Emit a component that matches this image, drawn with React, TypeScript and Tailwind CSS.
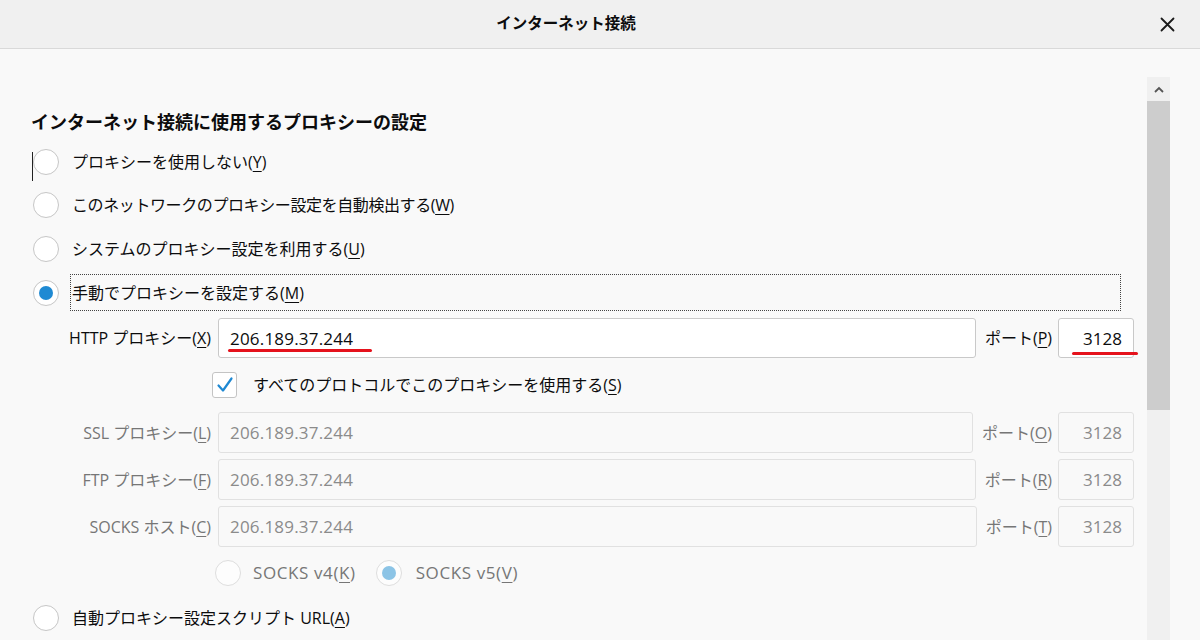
import React from "react";

const FONT = "font-['Open_Sans','Noto_Sans_CJK_JP',sans-serif]";

function Radio({ checked = false, disabled = false }: { checked?: boolean; disabled?: boolean }) {
  return (
    <span
      className={
        "w-[26px] h-[26px] rounded-full border flex items-center justify-center shrink-0 " +
        (disabled ? "border-[#dedede] bg-[#fdfdfd]" : "border-[#c6c6c6] bg-white")
      }
    >
      {checked && (
        <span className={"w-[14px] h-[14px] rounded-full " + (disabled ? "bg-[#8cc4e6]" : "bg-[#1f8ad3]")} />
      )}
    </span>
  );
}

function U({ children }: { children: React.ReactNode }) {
  return <span className="underline underline-offset-[3px] decoration-1">{children}</span>;
}

function ProxyRow({
  label,
  keyChar,
  portKey,
  disabled,
  mark,
}: {
  label: string;
  keyChar: string;
  portKey: string;
  disabled?: boolean;
  mark?: boolean;
}) {
  const txt = disabled ? "text-[#767676]" : "text-[#0c0c0d]";
  const box = disabled
    ? "border-[#e1e1e1] bg-[#f9f9f9] text-[#8b8b8b]"
    : "border-[#c9c9c9] bg-white text-[#0c0c0d]";
  return (
    <div className={"flex items-center " + (disabled ? "h-[41px]" : "h-[40px]")}>
      <div className={"w-[181px] shrink-0 text-right text-[16px] pr-[1px] " + txt}>
        {label}(<U>{keyChar}</U>)
      </div>
      <div className={"relative ml-[6px] flex-1 h-full border rounded-[3px] flex items-center pl-[11px] text-[17px] tracking-[0.2px] " + box}>
        206.189.37.244
        {mark && <span className="absolute left-[9px] top-[30px] w-[144px] h-[3px] rounded-full bg-[#e5121c]" />}
      </div>
      <div className={"ml-[9px] text-[16px] whitespace-nowrap " + txt}>
        ポート(<U>{portKey}</U>)
      </div>
      <div className={"relative ml-[6px] w-[76px] shrink-0 h-full border rounded-[3px] flex items-center justify-end pr-[11px] text-[17px] " + box}>
        3128
        {mark && <span className="absolute left-[13px] top-[33px] w-[66px] h-[3px] rounded-full bg-[#e5121c]" />}
      </div>
    </div>
  );
}

export default function App() {
  return (
    <div className={"w-[1200px] h-[640px] overflow-hidden bg-[#f9f9f9] text-[#0c0c0d] flex flex-col " + FONT}>
      {/* title bar */}
      <div className="relative h-[49px] shrink-0 bg-[#f0f0f0] border-b border-[#d9d9d9] flex items-center justify-center pr-[68px]">
        <span className="text-[15.5px] font-semibold">インターネット接続</span>
        <svg className="absolute right-[25px] top-[17px]" width="15" height="15" viewBox="0 0 15 15">
          <path d="M1.5 1.5 L13.5 13.5 M13.5 1.5 L1.5 13.5" stroke="#1a1a1a" strokeWidth="1.8" strokeLinecap="round" />
        </svg>
      </div>

      {/* body */}
      <div className="flex flex-1 min-h-0">
        <div className="flex-1 pl-[31px] pt-[60px] flex flex-col">
          <div className="h-[26px] flex items-center text-[18px] font-bold leading-none">
            インターネット接続に使用するプロキシーの設定
          </div>

          <div className="mt-[6px] relative h-[44px] flex items-center">
            <span className="absolute left-[1px] top-[11px] w-[1px] h-[29px] bg-[#222]" />
            <span className="ml-[2px]"><Radio /></span>
            <span className="ml-[13px] text-[16px]">プロキシーを使用しない(<U>Y</U>)</span>
          </div>
          <div className="h-[44px] flex items-center">
            <span className="ml-[2px]"><Radio /></span>
            <span className="ml-[13px] text-[16px] tracking-[-0.4px]">このネットワークのプロキシー設定を自動検出する(<U>W</U>)</span>
          </div>
          <div className="h-[45px] flex items-center">
            <span className="ml-[2px]"><Radio /></span>
            <span className="ml-[13px] text-[16px]">システムのプロキシー設定を利用する(<U>U</U>)</span>
          </div>
          <div className="h-[44px] flex items-center">
            <span className="ml-[2px]"><Radio checked /></span>
            <span className="ml-[11px] mr-[13px] flex-1 h-[37px] border border-dotted border-[#444] flex items-center pl-[1px] text-[16px]">
              手動でプロキシーを設定する(<U>M</U>)
            </span>
          </div>

          <div className="mt-[4px]">
            <ProxyRow label="HTTP プロキシー" keyChar="X" portKey="P" mark />
          </div>

          <div className="h-[55px] flex items-center pl-[181px]">
            <span className="w-[25px] h-[26px] rounded-[3px] border border-[#c4c4c4] bg-white flex items-center justify-center shrink-0">
              <svg width="18" height="18" viewBox="0 0 18 18">
                <path d="M2.5 9.5 L7 14.5 L15.5 2.5" fill="none" stroke="#1e88d2" strokeWidth="2.2" strokeLinecap="round" strokeLinejoin="round" />
              </svg>
            </span>
            <span className="ml-[16px] text-[16px]">すべてのプロトコルでこのプロキシーを使用する(<U>S</U>)</span>
          </div>

          <div className="flex flex-col gap-[6px]">
            <ProxyRow label="SSL プロキシー" keyChar="L" portKey="O" disabled />
            <ProxyRow label="FTP プロキシー" keyChar="F" portKey="R" disabled />
            <ProxyRow label="SOCKS ホスト" keyChar="C" portKey="T" disabled />
          </div>

          <div className="mt-[6px] h-[40px] flex items-center pl-[184px] text-[17px] tracking-[0.6px] text-[#767676]">
            <Radio disabled />
            <span className="ml-[12px]">SOCKS v4(<U>K</U>)</span>
            <span className="ml-[20px]"><Radio checked disabled /></span>
            <span className="ml-[14px]">SOCKS v5(<U>V</U>)</span>
          </div>

          <div className="mt-[4px] h-[44px] flex items-center">
            <span className="ml-[2px]"><Radio /></span>
            <span className="ml-[13px] text-[16px]">自動プロキシー設定スクリプト URL(<U>A</U>)</span>
          </div>
        </div>

        {/* scrollbar */}
        <div className="w-[23px] shrink-0 ml-[13px] mr-[30px] mt-[28px] flex flex-col bg-[#f0f0f0]">
          <div className="h-[24px] flex items-center justify-center">
            <svg width="10" height="7" viewBox="0 0 10 7">
              <path d="M1 6 L5 2 L9 6" fill="none" stroke="#555" strokeWidth="1.8" />
            </svg>
          </div>
          <div className="h-[309px] bg-[#cdcdcd]" />
        </div>
      </div>
    </div>
  );
}
